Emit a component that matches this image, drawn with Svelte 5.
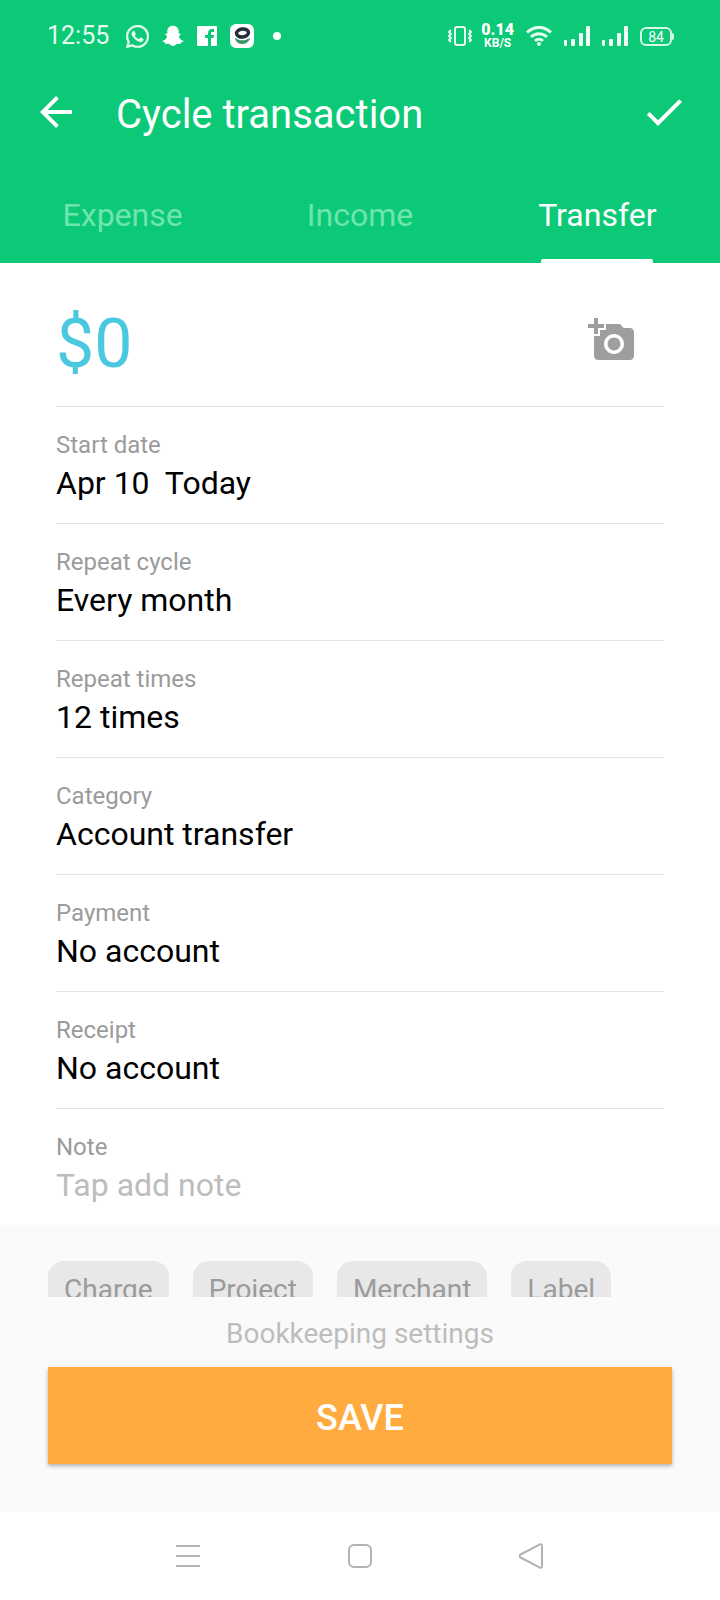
<script>
  let activeTab = $state('Transfer');
  let amount = $state('$0');
  let note = $state('');

  const tabs = ['Expense', 'Income', 'Transfer'];
  const fields = [
    { label: 'Start date', value: 'Apr 10\u00a0 Today' },
    { label: 'Repeat cycle', value: 'Every month' },
    { label: 'Repeat times', value: '12 times' },
    { label: 'Category', value: 'Account transfer' },
    { label: 'Payment', value: 'No account' },
    { label: 'Receipt', value: 'No account' }
  ];
  const chips = ['Charge', 'Project', 'Merchant', 'Label'];
</script>

{#snippet signal()}
  <svg width="26" height="20" viewBox="0 0 26 20" fill="#f0fdf6" aria-hidden="true">
    <rect x="0" y="14" width="3" height="6" rx="1" />
    <rect x="7" y="13" width="4" height="7" rx="1" />
    <rect x="15" y="7" width="4" height="13" rx="1" />
    <rect x="22" y="0" width="4" height="20" rx="1" />
  </svg>
{/snippet}

<div class="app">
  <header>
    <div class="status">
      <div class="left">
        <span class="clock">12:55</span>
        <svg width="23" height="23" viewBox="0 0 24 24" fill="#e4fbef" stroke="#e4fbef" stroke-width=".4" aria-hidden="true">
          <path d="M17.472 14.382c-.297-.149-1.758-.867-2.030-.967-.273-.099-.471-.148-.67.15-.197.297-.767.966-.94 1.164-.173.199-.347.223-.644.075-.297-.15-1.255-.463-2.390-1.475-.883-.788-1.480-1.761-1.653-2.059-.173-.297-.018-.458.13-.606.134-.133.298-.347.446-.52.149-.174.198-.298.298-.497.099-.198.05-.371-.025-.52-.075-.149-.669-1.612-.916-2.207-.242-.579-.487-.5-.669-.51-.173-.008-.371-.01-.57-.01-.198 0-.52.074-.792.372-.272.297-1.040 1.016-1.040 2.479 0 1.462 1.065 2.875 1.213 3.074.149.198 2.096 3.200 5.077 4.487.709.306 1.262.489 1.694.625.712.227 1.360.195 1.871.118.571-.085 1.758-.719 2.006-1.413.248-.694.248-1.289.173-1.413-.074-.124-.272-.198-.57-.347m-5.421 7.403h-.004a9.870 9.870 0 01-5.031-1.378l-.361-.214-3.741.982.998-3.648-.235-.374a9.860 9.860 0 01-1.510-5.260c.001-5.450 4.436-9.884 9.888-9.884 2.640 0 5.122 1.030 6.988 2.898a9.825 9.825 0 012.893 6.994c-.003 5.450-4.437 9.884-9.885 9.884m8.413-18.297A11.815 11.815 0 0012.050 0C5.495 0 .16 5.335.157 11.892c0 2.096.547 4.142 1.588 5.945L.057 24l6.305-1.654a11.882 11.882 0 005.683 1.448h.005c6.554 0 11.890-5.335 11.893-11.893a11.821 11.821 0 00-3.480-8.413z" />
        </svg>
        <svg width="22" height="22" viewBox="0 0 22 22" fill="#fff" aria-hidden="true">
          <path d="M11 .8c3.600 0 5.700 2.500 5.700 5.700v2.200c.8.2 1.700-.3 2.100.3.4.9-1.200 1.300-1.800 1.900-.3 2.200 2.200 4.300 4.300 4.800.7.800-.9 1.500-2.400 1.700-.4.500-.1 1.400-.9 1.500-1 .1-2-.3-3.100.2-1.200.7-2.100 1.900-3.900 1.900s-2.700-1.200-3.900-1.900c-1.100-.5-2.100-.1-3.100-.2-.8-.1-.5-1-.9-1.500-1.500-.2-3.100-.9-2.400-1.700 2.100-.5 4.600-2.600 4.300-4.800-.6-.6-2.200-1-1.800-1.900.4-.6 1.300-.1 2.100-.3V6.500C5.300 3.300 7.400.8 11 .8z" />
        </svg>
        <svg width="20" height="20" viewBox="0 0 20 20" aria-hidden="true">
          <rect width="20" height="20" rx="1" fill="#fff" />
          <path d="M11 20v-8H8V9h3V7c0-2.700 1.600-4 4-4h2v3h-1.500C14.400 6 14 6.500 14 7.400V9h3l-.4 3H14v8z" fill="#0bc976" />
        </svg>
        <svg width="24" height="24" viewBox="0 0 24 24" aria-hidden="true">
          <rect width="24" height="24" rx="6" fill="#fff" />
          <path d="M5 13.500c0 3 3 6.500 7 6.500s7.500-2.500 8-6.500c-3.500 3.500-11 4-15 0z" fill="#3f9168" />
          <ellipse cx="12.500" cy="9" rx="6" ry="4" fill="#fff" stroke="#242a38" stroke-width="3.500" transform="rotate(-8 12.500 9)" />
        </svg>
        <span class="dot"></span>
      </div>
      <div class="right">
        <svg width="24" height="20" viewBox="0 0 24 20" fill="none" stroke="#e4fbef" stroke-width="2" aria-hidden="true">
          <rect x="7" y="1" width="10" height="18" rx="2" />
          <path d="M3 4l-2 2 2 2-2 2 2 2-2 2 2 2M21 4l2 2-2 2 2 2-2 2 2 2-2 2" />
        </svg>
        <div class="speed"><b>0.14</b><span>KB/S</span></div>
        <svg width="26" height="20" viewBox="0 0 26 20" fill="none" stroke="#e4fbef" stroke-width="3" aria-hidden="true">
          <path d="M1 6.500C8-.3 18-.3 25 6.500M5 11c4.600-4.400 11.400-4.400 16 0M9 15c2.300-2.200 5.700-2.200 8 0" />
          <circle cx="13" cy="18" r="2" fill="#e4fbef" stroke="none" />
        </svg>
        {@render signal()}
        {@render signal()}
        <div class="battery">84</div>
      </div>
    </div>

    <div class="bar">
      <button class="icon" aria-label="Back">
        <svg width="48" height="48" viewBox="0 0 24 24" fill="#fff"><path d="M20 11H7.830l5.590-5.590L12 4l-8 8 8 8 1.410-1.410L7.830 13H20v-2z" /></svg>
      </button>
      <h1>Cycle transaction</h1>
      <button class="icon" aria-label="Confirm">
        <svg width="48" height="48" viewBox="0 0 24 24" fill="#fff"><path d="M9 16.170L4.830 12l-1.420 1.410L9 19 21 7l-1.410-1.410z" /></svg>
      </button>
    </div>

    <div class="tabs" role="tablist">
      {#each tabs as tab}
        <button role="tab" aria-selected={activeTab === tab} class:active={activeTab === tab} onclick={() => (activeTab = tab)}>
          {tab}
        </button>
      {/each}
    </div>
  </header>

  <main>
    <div class="form">
      <div class="amount">
        <input type="text" aria-label="Amount" bind:value={amount} />
        <button class="icon" aria-label="Add photo">
          <svg width="48" height="48" viewBox="0 0 24 24" fill="#9e9e9e">
            <path d="M3 4V1h2v3h3v2H5v3H3V6H0V4h3zm3 6V7h3V4h7l1.830 2H21c1.100 0 2 .9 2 2v12c0 1.100-.9 2-2 2H5c-1.100 0-2-.9-2-2V10h3zm7 9c2.760 0 5-2.240 5-5s-2.240-5-5-5-5 2.240-5 5 2.240 5 5 5zm-3.200-5c0 1.770 1.430 3.200 3.200 3.200s3.200-1.430 3.200-3.200-1.430-3.200-3.200-3.200-3.200 1.430-3.200 3.200z" />
          </svg>
        </button>
      </div>
      {#each fields as field}
        <button class="row">
          <span class="label">{field.label}</span>
          <span class="value">{field.value}</span>
        </button>
      {/each}
      <div class="row">
        <label class="label" for="note">Note</label>
        <input class="value" id="note" type="text" placeholder="Tap add note" bind:value={note} />
      </div>
    </div>
    <div class="chips">
      {#each chips as chip}
        <button>{chip}</button>
      {/each}
    </div>
  </main>

  <footer>
    <button class="settings">Bookkeeping settings</button>
    <button class="save">SAVE</button>
  </footer>

  <nav aria-label="System">
    <button class="icon" aria-label="Recent apps">
      <svg width="26" height="26" viewBox="0 0 26 26" fill="none" stroke="#b3b3b3" stroke-width="2"><path d="M1 3h24M1 13h24M1 23h24" /></svg>
    </button>
    <button class="icon" aria-label="Home">
      <svg width="26" height="26" viewBox="0 0 26 26" fill="none" stroke="#b3b3b3" stroke-width="2"><rect x="2" y="2" width="22" height="22" rx="5" /></svg>
    </button>
    <button class="icon" aria-label="Go back">
      <svg width="26" height="26" viewBox="0 0 26 26" fill="none" stroke="#b3b3b3" stroke-width="2" stroke-linejoin="round"><path d="M21 1.300L1.500 11.500q-2 1.500 0 3L21 24.700q2 .6 2-1.700V3q0-2.300-2-1.700z" /></svg>
    </button>
  </nav>
</div>

<style>
  :global(body) {
    margin: 0;
  }

  .app {
    display: flex;
    flex-direction: column;
    height: 100vh;
    background: #fff;
    color: #000;
    font-family: Roboto, 'Liberation Sans', sans-serif;
  }

  button,
  input {
    margin: 0;
    padding: 0;
    border: 0;
    background: none;
    color: inherit;
    font: inherit;
    min-width: 0;
  }

  svg {
    display: block;
    flex: none;
  }

  .icon {
    display: flex;
  }

  header {
    flex: none;
    background: #0bc976;
    color: #fff;
  }

  .status {
    display: flex;
    justify-content: space-between;
    align-items: center;
    height: 72px;
    padding: 0 48px 0 47px;
  }

  .left {
    display: flex;
    align-items: center;
    gap: 13px;
  }

  .right {
    display: flex;
    align-items: center;
    gap: 12px;
  }

  .clock {
    margin-right: 4px;
    font-size: 25px;
    line-height: 28px;
    color: #e4fbef;
  }

  .dot {
    width: 8px;
    height: 8px;
    margin-left: 6px;
    border-radius: 50%;
    background: #fff;
  }

  .speed {
    display: flex;
    flex-direction: column;
    align-items: center;
    margin-left: -3px;
    font-size: 12px;
    line-height: 12px;
    font-weight: 700;
  }

  .speed b {
    font-size: 16px;
    line-height: 14px;
  }

  .battery {
    position: relative;
    box-sizing: border-box;
    width: 32px;
    height: 19px;
    border: 2px solid #d5f8e6;
    border-radius: 6px;
    font-size: 14px;
    line-height: 16px;
    text-align: center;
  }

  .battery::after {
    content: '';
    position: absolute;
    top: 4px;
    right: -4px;
    width: 2px;
    height: 7px;
    border-radius: 0 2px 2px 0;
    background: #d5f8e6;
  }

  .bar {
    display: flex;
    align-items: center;
    height: 80px;
    padding: 0 32px;
  }

  h1 {
    flex: 1;
    margin: 0 0 0 36px;
    padding-top: 5px;
    font-size: 40px;
    line-height: 48px;
    font-weight: 400;
  }

  .tabs {
    display: grid;
    grid-template-columns: repeat(3, 1fr);
    padding: 0 4px;
  }

  .tabs button {
    display: flex;
    flex-direction: column;
    align-items: center;
    gap: 25px;
    padding-top: 44px;
    color: #6fe5ae;
    font-size: 32px;
    line-height: 38px;
  }

  .tabs button::after {
    content: '';
    width: 112px;
    height: 4px;
    border-radius: 2px 2px 0 0;
  }

  .tabs .active {
    color: #fff;
  }

  .tabs .active::after {
    background: #fff;
  }

  main {
    flex: 1;
    min-height: 0;
    overflow-y: auto;
    scrollbar-width: none;
    background: #fafafa;
  }

  .form {
    padding: 0 56px;
    background: #fff;
  }

  .amount {
    display: flex;
    box-sizing: border-box;
    align-items: center;
    justify-content: space-between;
    height: 144px;
    padding: 10px 28px 0 0;
    border-bottom: 1px solid #e2e2e2;
  }

  .amount input {
    flex: 1;
    height: 84px;
    padding-top: 8px;
    color: #4ac8e0;
    font-size: 68px;
    line-height: 84px;
  }

  .row {
    display: flex;
    flex-direction: column;
    align-items: flex-start;
    gap: 4px;
    width: 100%;
    padding: 24px 0 20px;
    border-bottom: 1px solid #e2e2e2;
    text-align: left;
  }

  .row:last-child {
    border-bottom: 0;
  }

  .label {
    color: #9b9b9b;
    font-size: 24px;
    line-height: 28px;
  }

  .value {
    height: 40px;
    font-size: 32px;
    line-height: 40px;
  }

  input.value {
    width: 100%;
  }

  input.value::placeholder {
    color: #bdbdbd;
    opacity: 1;
  }

  .chips {
    display: flex;
    gap: 24px;
    padding: 36px 48px;
  }

  .chips button {
    padding: 11px 16px;
    border-radius: 16px;
    background: #e8e8e8;
    color: #9b9b9b;
    font-size: 28px;
    line-height: 36px;
  }

  footer {
    display: flex;
    flex: none;
    flex-direction: column;
    align-items: center;
    padding: 19px 48px 48px;
    background: #fafafa;
  }

  .settings {
    margin-bottom: 15px;
    color: #bdbdbd;
    font-size: 28px;
    line-height: 36px;
  }

  .save {
    width: 100%;
    height: 97px;
    padding-top: 4px;
    background: #ffab40;
    box-shadow: 0 2px 4px rgba(0, 0, 0, 0.3);
    color: #fff;
    font-size: 36px;
    line-height: 40px;
    font-weight: 500;
  }

  nav {
    display: flex;
    flex: none;
    align-items: center;
    justify-content: space-between;
    height: 88px;
    padding: 0 calc(24.5% - 1px);
  }
</style>
